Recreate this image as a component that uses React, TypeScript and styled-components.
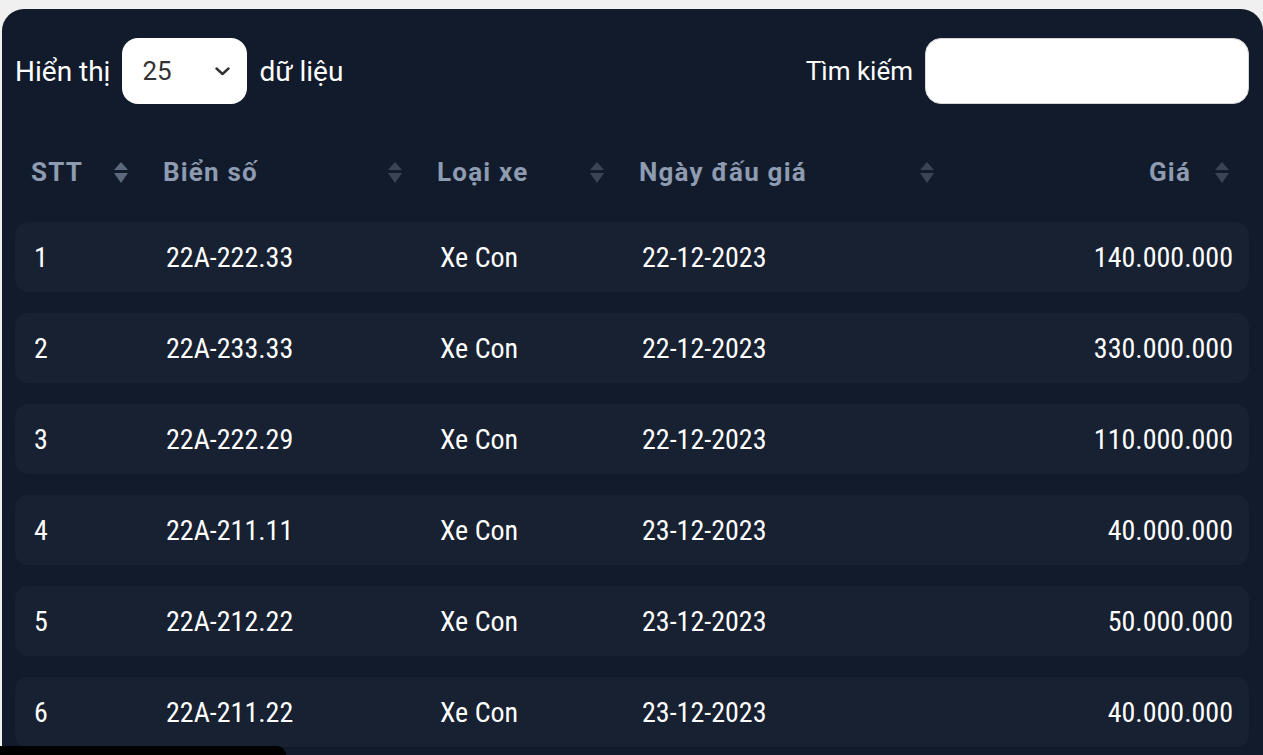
import React from 'react'
import styled, { createGlobalStyle } from 'styled-components'

const GlobalStyle = createGlobalStyle`
  html, body {
    margin: 0;
    padding: 0;
    overflow: hidden;
    background: #f0f0f0;
    font-family: Roboto, "Noto Sans", sans-serif;
  }
`

const Page = styled.div`
  padding: 9px 0 0 2px;
  height: 755px;
  box-sizing: border-box;
`

const Card = styled.div`
  background: #111b2b;
  border-radius: 22px 22px 0 0;
  height: 100%;
  padding: 29px 14px 0 13px;
  box-sizing: border-box;
`

const Toolbar = styled.div`
  display: flex;
  justify-content: space-between;
  align-items: center;
`

const Group = styled.label<{ $size: number }>`
  display: flex;
  align-items: center;
  gap: 12px;
  color: #ffffff;
  font-size: ${p => p.$size}px;
`

const SelectBox = styled.div`
  width: 125px;
  height: 66px;
  box-sizing: border-box;
  background: #ffffff;
  border-radius: 16px;
  display: flex;
  align-items: center;
  justify-content: space-between;
  padding: 0 17px 0 20px;
  color: #333333;
  font-size: 26px;
`

const SearchInput = styled.input`
  width: 324px;
  height: 66px;
  box-sizing: border-box;
  border: 1px solid #d6d6d6;
  border-radius: 16px;
  background: #ffffff;
  outline: none;
  font-size: 24px;
  padding: 0 16px;
`

const Table = styled.div`
  margin-top: 38px;
  display: flex;
  flex-direction: column;
  gap: 20px;
`

const cols = '132px 274px 202px 330px 295px'

const HeadRow = styled.div`
  display: grid;
  grid-template-columns: ${cols};
  height: 60px;
  align-items: center;
`

const HeadCell = styled.div<{ $right?: boolean }>`
  display: flex;
  align-items: center;
  justify-content: ${p => (p.$right ? 'flex-end' : 'space-between')};
  gap: 24px;
  padding: 0 19px 0 16px;
  color: #8e9bb0;
  font-weight: 700;
  font-size: 26px;
  letter-spacing: 1.2px;
  font-stretch: 90%;
`

const Body = styled.div`
  display: flex;
  flex-direction: column;
  gap: 21px;
`

const Row = styled.div`
  display: grid;
  grid-template-columns: ${cols};
  height: 70px;
  align-items: center;
  background: #182131;
  border-radius: 13px;
`

const Cell = styled.div<{ $right?: boolean }>`
  padding: 0 15px 0 19px;
  text-align: ${p => (p.$right ? 'right' : 'left')};
  color: #ffffff;
  font-size: 28px;
  font-stretch: 80%;
`

const Overlay = styled.div`
  position: fixed;
  left: 0;
  bottom: 0;
  width: 286px;
  height: 9px;
  background: #000000;
  border-top-right-radius: 24px;
`

const SortIcon: React.FC<{ active?: boolean }> = ({ active }) => (
  <svg width="14" height="21" viewBox="0 0 14 21">
    <g fill={active ? '#5b687d' : '#3a4456'}>
      <path d="M7 0 L14 8 H0 Z" />
      <path d="M0 11 H14 L7 21 Z" />
    </g>
  </svg>
)

const Chevron = () => (
  <svg width="15" height="9" viewBox="0 0 15 9">
    <path d="M1.5 1.5 L7.5 7 L13.5 1.5" fill="none" stroke="#333" strokeWidth="2.4" strokeLinecap="round" strokeLinejoin="round" />
  </svg>
)

const rows = [
  ['1', '22A-222.33', 'Xe Con', '22-12-2023', '140.000.000'],
  ['2', '22A-233.33', 'Xe Con', '22-12-2023', '330.000.000'],
  ['3', '22A-222.29', 'Xe Con', '22-12-2023', '110.000.000'],
  ['4', '22A-211.11', 'Xe Con', '23-12-2023', '40.000.000'],
  ['5', '22A-212.22', 'Xe Con', '23-12-2023', '50.000.000'],
  ['6', '22A-211.22', 'Xe Con', '23-12-2023', '40.000.000'],
]

const heads = ['STT', 'Biển số', 'Loại xe', 'Ngày đấu giá', 'Giá']

const App: React.FC = () => {
  return (
    <Page>
      <GlobalStyle />
      <Card>
        <Toolbar>
          <Group $size={28}>
            Hiển thị
            <SelectBox>
              25
              <Chevron />
            </SelectBox>
            dữ liệu
          </Group>
          <Group $size={26}>
            Tìm kiếm
            <SearchInput />
          </Group>
        </Toolbar>
        <Table>
          <HeadRow>
            {heads.map((h, i) => (
              <HeadCell key={h} $right={i === 4}>
                <span>{h}</span>
                <SortIcon active={i === 0} />
              </HeadCell>
            ))}
          </HeadRow>
          <Body>
            {rows.map(r => (
              <Row key={r[0]}>
                {r.map((c, i) => (
                  <Cell key={i} $right={i === 4}>{c}</Cell>
                ))}
              </Row>
            ))}
          </Body>
        </Table>
      </Card>
      <Overlay />
    </Page>
  )
}

export default App
